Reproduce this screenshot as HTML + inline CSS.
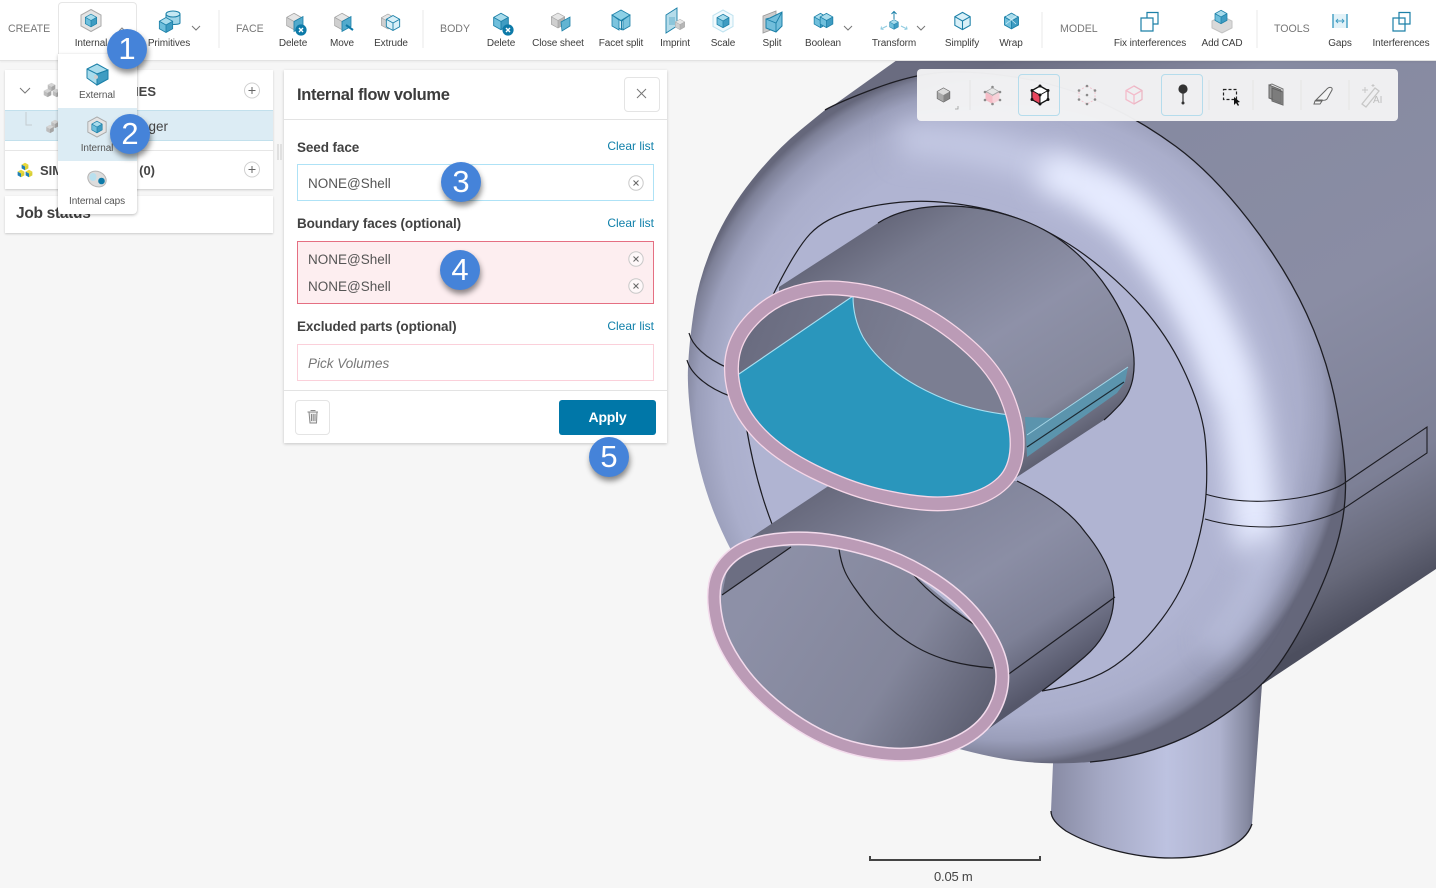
<!DOCTYPE html>
<html lang="en"><head><meta charset="utf-8"><title>Internal flow volume</title>
<style>
html,body{margin:0;padding:0}
body{width:1436px;height:888px;position:relative;overflow:hidden;background:#f6f6f6;font-family:"Liberation Sans",sans-serif;color:#333}
.a{position:absolute;white-space:nowrap}
svg.a{left:0;top:0;overflow:visible}
.l{font-size:10px;line-height:12px;top:38px;color:#3c3c3c;transform:translateX(-50%);letter-spacing:-.1px}
.s{font-size:10.6px;line-height:14px;top:22px;color:#777}
.box{position:absolute;box-sizing:border-box;background:#fff}
.h{font-size:13.5px;font-weight:bold;color:#424242;line-height:16px;letter-spacing:-.1px}
.c{font-size:12px;color:#1080aa;line-height:14px;right:782px}
.v{font-size:13.5px;color:#555;line-height:16px;left:308px}
.b{position:absolute;width:40px;height:40px;border-radius:50%;background:#4583d9;color:#fff;font-size:31px;line-height:40px;text-align:center;box-shadow:1px 4px 6px rgba(0,0,0,.45)}
</style></head><body>

<!-- 3D model -->
<svg class="a" width="1436" height="888" viewBox="0 0 1436 888">
<defs>
<linearGradient id="gBack" gradientUnits="userSpaceOnUse" x1="1000" y1="60" x2="1320" y2="640">
<stop offset="0" stop-color="#6a6c80"/><stop offset=".2" stop-color="#868aa1"/><stop offset=".55" stop-color="#8a8da4"/><stop offset=".82" stop-color="#7d8096"/><stop offset=".93" stop-color="#666879"/><stop offset="1" stop-color="#4c4e5e"/></linearGradient>
<linearGradient id="gStem" gradientUnits="userSpaceOnUse" x1="1050" y1="0" x2="1262" y2="0">
<stop offset="0" stop-color="#878aa3"/><stop offset=".25" stop-color="#a5a9c5"/><stop offset=".55" stop-color="#bdc2e0"/><stop offset=".8" stop-color="#aeb2ce"/><stop offset=".93" stop-color="#868aa1"/><stop offset="1" stop-color="#64667a"/></linearGradient>
<radialGradient id="gHead" gradientUnits="userSpaceOnUse" cx="0" cy="0" r="1" gradientTransform="translate(1010 413) scale(337 352)">
<stop offset="0" stop-color="#b0b4d2"/><stop offset=".74" stop-color="#b0b4d2"/><stop offset=".86" stop-color="#aaaecb"/><stop offset=".93" stop-color="#9a9eba"/><stop offset=".98" stop-color="#7d8097"/><stop offset="1" stop-color="#65677b"/></radialGradient>
<linearGradient id="gPipe" gradientUnits="userSpaceOnUse" x1="779" y1="287" x2="934" y2="529">
<stop offset="0" stop-color="#66687b"/><stop offset=".15" stop-color="#787b8f"/><stop offset=".55" stop-color="#8e91a8"/><stop offset=".85" stop-color="#85889c"/><stop offset="1" stop-color="#5f6173"/></linearGradient>
<linearGradient id="gPipe2" gradientUnits="userSpaceOnUse" x1="747" y1="539" x2="901" y2="779">
<stop offset="0" stop-color="#686a7d"/><stop offset=".3" stop-color="#82859b"/><stop offset=".55" stop-color="#8b8ea5"/><stop offset=".8" stop-color="#7d8096"/><stop offset="1" stop-color="#55576a"/></linearGradient>
<linearGradient id="gIn1" gradientUnits="userSpaceOnUse" x1="750" y1="310" x2="900" y2="370">
<stop offset="0" stop-color="#696b7f"/><stop offset="1" stop-color="#7b7e92"/></linearGradient>
<linearGradient id="gIn2" gradientUnits="userSpaceOnUse" x1="760" y1="590" x2="980" y2="730">
<stop offset="0" stop-color="#8d90a7"/><stop offset=".6" stop-color="#83869b"/><stop offset="1" stop-color="#5c5e70"/></linearGradient>
<filter id="bl" filterUnits="userSpaceOnUse" x="600" y="0" width="836" height="888"><feGaussianBlur stdDeviation="13"/></filter>
<clipPath id="cHead"><path d="M800.5 130Q776 150 752 180Q728 210 713.5 243.5Q699 277 694 310Q689 343 688 368Q687 393 693 433.5Q699 474 713.5 511.5Q728 549 759 599.5Q790 650 835 687.5Q880 725 920 737.5Q960 750 988.5 756Q1017 762 1041.5 763Q1066 764 1090 762Q1114 760 1138 754Q1162 748 1186 737Q1210 726 1236.5 706Q1263 686 1279 664Q1295 642 1311.5 608Q1328 574 1336.5 545.5Q1345 517 1345.5 488.5Q1346 460 1337 410Q1328 360 1306.500 313.5Q1285 267 1248.5 220Q1212 173 1176 146.5Q1140 120 1100 102Q1060 84 1014.5 77Q969 70 940 72.5Q911 75 875 88.5Q839 102 825 110Z"/></clipPath>
</defs>
<path d="M820 115L897 60H1436V569L1263 684L1000 400Z" fill="url(#gBack)"/>
<path d="M1054 740L1263 670L1252 824C1245 845 1215 858 1172 858C1130 858 1090 845 1066 831C1056 824 1051 818 1051 811Z" fill="url(#gStem)"/>
<path d="M1051 811C1051 818 1056 824 1066 831C1090 845 1130 858 1172 858C1215 858 1245 845 1252 824" fill="none" stroke="#1c1c22" stroke-width="1.3"/>
<path d="M800.5 130Q776 150 752 180Q728 210 713.5 243.5Q699 277 694 310Q689 343 688 368Q687 393 693 433.5Q699 474 713.5 511.5Q728 549 759 599.5Q790 650 835 687.5Q880 725 920 737.5Q960 750 988.5 756Q1017 762 1041.5 763Q1066 764 1090 762Q1114 760 1138 754Q1162 748 1186 737Q1210 726 1236.5 706Q1263 686 1279 664Q1295 642 1311.5 608Q1328 574 1336.5 545.5Q1345 517 1345.5 488.5Q1346 460 1337 410Q1328 360 1306.500 313.5Q1285 267 1248.5 220Q1212 173 1176 146.5Q1140 120 1100 102Q1060 84 1014.5 77Q969 70 940 72.5Q911 75 875 88.5Q839 102 825 110Z" fill="url(#gHead)"/>
<g clip-path="url(#cHead)">
<path d="M900 140Q980 140 1050 170" fill="none" stroke="#c4c9e4" stroke-width="34" filter="url(#bl)"/>
<path d="M1060 175Q1100 190 1130 215Q1200 285 1235 390Q1250 450 1255 530" fill="none" stroke="#e6ebff" stroke-width="46" filter="url(#bl)" stroke-linecap="round"/>
<path d="M1100 195Q1115 205 1130 215Q1195 285 1228 385" fill="none" stroke="#e6ebff" stroke-width="22" filter="url(#bl)" stroke-linecap="round"/>
<path d="M1265 540C1258 590 1240 620 1210 650" fill="none" stroke="#bcc1de" stroke-width="30" filter="url(#bl)" opacity=".8"/>
</g>
<!-- outer arc -->
<path d="M1090 762Q1114 760 1138 754Q1162 748 1186 737Q1210 726 1236.5 706Q1263 686 1279 664Q1295 642 1311.5 608Q1328 574 1336.5 545.5Q1345 517 1345.5 488.5Q1346 460 1337 410Q1328 360 1306.500 313.5Q1285 267 1248.5 220Q1212 173 1176 146.5Q1140 120 1100 102Q1060 84 1014.5 77Q969 70 940 72.5Q911 75 875 88.5Q839 102 825 110" fill="none" stroke="#1c1c22" stroke-width="1.3"/>
<!-- band lines -->
<path d="M689 333C692 345 705 358 728 368M687 360C690 372 705 387 730 396" fill="none" stroke="#1c1c22" stroke-width="1.2"/>
<path d="M1205 494C1225 500 1248 502 1268 501C1290 500 1325 495 1343 484L1427 427V453L1340 511C1322 520 1290 527 1268 527C1245 527 1225 525 1205 519" fill="none" stroke="#1c1c22" stroke-width="1.1"/>
<!-- inner flat -->
<path d="M772 297Q795 250 810 234Q825 218 853.5 210.5Q882 203 911 201.5Q940 200 978.5 207.5Q1017 215 1053.5 235Q1090 255 1126 290Q1162 325 1182.5 367.5Q1203 410 1205.5 442Q1208 474 1205.5 500.5Q1203 527 1193 559Q1183 591 1161.5 619.5Q1140 648 1115 665.5Q1090 683 1042 691L772 524Q757 480 746 430Z" fill="#b0b4d2"/>
<path d="M772 297Q795 250 810 234Q825 218 853.5 210.5Q882 203 911 201.5Q940 200 978.5 207.5Q1017 215 1053.5 235Q1090 255 1126 290Q1162 325 1182.5 367.5Q1203 410 1205.5 442Q1208 474 1205.5 500.5Q1203 527 1193 559Q1183 591 1161.5 619.5Q1140 648 1115 665.5Q1090 683 1042 691M746 425Q755 480 772 524" fill="none" stroke="#1c1c22" stroke-width="1.2"/>
<!-- lower pipe -->
<path d="M735 548L830 485L1017 481Q1066 505 1085 532Q1104 555 1110.5 576Q1117 597 1110.5 618.5Q1104 640 1085 656.5Q1066 673 1042 691L980 735L800 700Z" fill="url(#gPipe2)"/>
<path d="M1017 481Q1066 505 1085 532Q1104 555 1110.5 576Q1117 597 1110.5 618.5Q1104 640 1085 656.5Q1066 673 1042 691M1115 597L1006 676" fill="none" stroke="#1c1c22" stroke-width="1.2"/>
<!-- upper pipe -->
<path d="M779 287L878 223Q900 209 934.5 206.5Q969 204 1005.5 214.5Q1042 225 1067 245Q1092 265 1109 291Q1126 317 1131 338.5Q1136 360 1133 377.5Q1130 395 1117 407.5Q1111 414 1104 420L1017 477L780 420Z" fill="url(#gPipe)"/>
<path d="M878 223Q900 209 934.5 206.5Q969 204 1005.5 214.5Q1042 225 1067 245Q1092 265 1109 291Q1126 317 1131 338.5Q1136 360 1133 377.5Q1130 395 1117 407.5Q1111 414 1104 420" fill="none" stroke="#1c1c22" stroke-width="1.2"/>
<!-- small strip -->
<path d="M1025 417L1052 418L1128 367L1125 382L1117 393L1027 457Z" fill="#5b94ad"/>
<path d="M1027 435L1052 418L1128 367" fill="none" stroke="#a5d5e6" stroke-width="1"/>
<path d="M1027 447L1124 382" fill="none" stroke="#1c2a33" stroke-width="1.1"/>
<!-- upper ring interior + blue face -->
<path d="M733 353.5Q737 335 752.5 319Q768 303 786.5 296Q805 289 823.5 288Q842 287 867 292Q892 297 919.5 311.5Q947 326 972 349Q997 372 1007.5 398.5Q1018 425 1017 447.5Q1016 470 1003 482.5Q990 495 970 500Q950 505 927.5 503.5Q905 502 876 495Q847 488 813.5 471.5Q780 455 760.5 435Q741 415 735 393.5Q729 372 733 353.5Z" fill="url(#gIn1)"/>
<path d="M853 296L736 376L735 393.5Q741 415 760.5 435Q780 455 813.5 471.5Q847 488 876 495Q905 502 927.5 503.5Q950 505 970 500Q990 495 1003 482.5Q1016 470 1017 447.5Q1018 425 1010 415Q975 411 947 400Q917 388 897 373Q875 357 863 337Q853 318 853 296Z" fill="#2a96bc"/>
<path d="M736 376L853 296Q853 318 863 337Q875 357 897 373Q917 388 947 400Q975 411 1010 415" fill="none" stroke="#a8e0f2" stroke-width="1.1"/>
<path d="M733 353.5Q737 335 752.5 319Q768 303 786.5 296Q805 289 823.5 288Q842 287 867 292Q892 297 919.5 311.5Q947 326 972 349Q997 372 1007.5 398.5Q1018 425 1017 447.5Q1016 470 1003 482.5Q990 495 970 500Q950 505 927.5 503.5Q905 502 876 495Q847 488 813.5 471.5Q780 455 760.5 435Q741 415 735 393.5Q729 372 733 353.5Z" fill="none" stroke="#f6d7e8" stroke-width="15"/>
<path d="M733 353.5Q737 335 752.5 319Q768 303 786.5 296Q805 289 823.5 288Q842 287 867 292Q892 297 919.5 311.5Q947 326 972 349Q997 372 1007.5 398.5Q1018 425 1017 447.5Q1016 470 1003 482.5Q990 495 970 500Q950 505 927.5 503.5Q905 502 876 495Q847 488 813.5 471.5Q780 455 760.5 435Q741 415 735 393.5Q729 372 733 353.5Z" fill="none" stroke="#bb9bb6" stroke-width="12.4"/>
<!-- lower ring -->
<path d="M715 584Q718 568 731.5 556.5Q745 545 767.5 541Q790 537 815 539Q840 541 872 550.5Q904 560 934.5 580Q965 600 982.5 625Q1000 650 1002 670Q1004 690 994.5 708.5Q985 727 965 738.5Q945 750 918.5 753.5Q892 757 858.5 749.5Q825 742 792.5 719.5Q760 697 741 671Q722 645 717 622.5Q712 600 715 584Z" fill="url(#gIn2)"/>
<path d="M722 595L791 547L760 545L728 565Z" fill="#6c6e82"/>
<path d="M905 560L985 625L984 632L911 572Z" fill="#b4b8d4"/>
<path d="M791 547L722 595M839 549C842 570 848 578 854 587C870 610 880 620 897 634C915 648 930 655 950 661C965 665 980 667 993 668M911 572C930 595 955 612 984 631" fill="none" stroke="#1c1c22" stroke-width="1.2"/>
<path d="M715 584Q718 568 731.5 556.5Q745 545 767.5 541Q790 537 815 539Q840 541 872 550.5Q904 560 934.5 580Q965 600 982.5 625Q1000 650 1002 670Q1004 690 994.5 708.5Q985 727 965 738.5Q945 750 918.5 753.5Q892 757 858.5 749.5Q825 742 792.5 719.5Q760 697 741 671Q722 645 717 622.5Q712 600 715 584Z" fill="none" stroke="#f3dbec" stroke-width="14"/>
<path d="M715 584Q718 568 731.5 556.5Q745 545 767.5 541Q790 537 815 539Q840 541 872 550.5Q904 560 934.5 580Q965 600 982.5 625Q1000 650 1002 670Q1004 690 994.5 708.5Q985 727 965 738.5Q945 750 918.5 753.5Q892 757 858.5 749.5Q825 742 792.5 719.5Q760 697 741 671Q722 645 717 622.5Q712 600 715 584Z" fill="none" stroke="#bb9bb6" stroke-width="11"/>
<path d="M870 856V860H1040V856" fill="none" stroke="#444" stroke-width="2"/>
</svg>
<div class="a" style="left:934px;top:869px;font-size:13px;line-height:16px;color:#444;letter-spacing:-.2px">0.05 m</div>

<!-- top bar -->
<div class="box" style="left:0;top:0;width:1436px;height:61px;border-bottom:1px solid #e2e2e2;box-shadow:0 1px 2px rgba(0,0,0,.05)"></div>

<!-- view toolbar -->
<div class="box" style="left:917px;top:69px;width:481px;height:52px;background:rgba(243,243,244,.97);border-radius:4px"></div>
<div class="box" style="left:1018px;top:74px;width:42px;height:42px;background:transparent;border:1px solid #b5dcec;border-radius:4px"></div>
<div class="box" style="left:1161px;top:74px;width:42px;height:42px;background:transparent;border:1px solid #b5dcec;border-radius:4px"></div>

<!-- left panels -->
<div class="box" style="left:5px;top:70px;width:268px;height:119px;box-shadow:0 1px 2px rgba(0,0,0,.18)"></div>
<div class="box" style="left:5px;top:110px;width:268px;height:31px;background:#dcecf4;border-top:1px solid #c2e0ec;border-bottom:1px solid #c2e0ec"></div>
<div class="box" style="left:5px;top:150px;width:268px;height:1px;background:#e6e6e6"></div>
<div class="box" style="left:5px;top:196px;width:268px;height:37px;box-shadow:0 1px 2px rgba(0,0,0,.18)"></div>
<div class="a" style="right:1280px;top:84px;font-size:13px;font-weight:bold;line-height:16px;color:#444">GEOMETRIES</div>
<div class="a" style="right:1268px;top:119px;font-size:13.5px;line-height:16px;color:#444">Heat exchanger</div>
<div class="a" style="left:40px;top:163px;font-size:13px;font-weight:bold;line-height:16px;color:#444">SIM</div>
<div class="a" style="right:1281px;top:163px;font-size:13px;font-weight:bold;line-height:16px;color:#444">(0)</div>
<div class="a" style="left:16px;top:204px;font-size:15.5px;font-weight:bold;line-height:20px;color:#3f3f3f;letter-spacing:-.3px">Job status</div>

<!-- flow panel -->
<div class="box" style="left:284px;top:70px;width:383px;height:373px;box-shadow:0 1px 3px rgba(0,0,0,.2)"></div>
<div class="box" style="left:284px;top:119px;width:383px;height:1px;background:#e3e3e3"></div>
<div class="box" style="left:284px;top:390px;width:383px;height:1px;background:#e3e3e3"></div>
<div class="a" style="left:297px;top:85px;font-size:16.5px;font-weight:bold;line-height:20px;color:#3c3c3c;letter-spacing:-.35px">Internal flow volume</div>
<div class="box" style="left:624px;top:77px;width:36px;height:35px;border:1px solid #e4e4e4;border-radius:4px"></div>
<div class="a h" style="left:297px;top:140px">Seed face</div>
<div class="a c" style="top:139px">Clear list</div>
<div class="box" style="left:297px;top:164px;width:357px;height:37px;border:1px solid #aee2f6"></div>
<div class="a v" style="top:176px">NONE@Shell</div>
<div class="a h" style="left:297px;top:216px">Boundary faces (optional)</div>
<div class="a c" style="top:216px">Clear list</div>
<div class="box" style="left:297px;top:241px;width:357px;height:63px;background:#fdeef0;border:1px solid #e56f82"></div>
<div class="a v" style="top:252px">NONE@Shell</div>
<div class="a v" style="top:279px">NONE@Shell</div>
<div class="a h" style="left:297px;top:319px">Excluded parts (optional)</div>
<div class="a c" style="top:319px">Clear list</div>
<div class="box" style="left:297px;top:344px;width:357px;height:37px;border:1px solid #fbd0da"></div>
<div class="a v" style="top:356px;font-style:italic;color:#777">Pick Volumes</div>
<div class="box" style="left:295px;top:400px;width:35px;height:35px;border:1px solid #e4e4e4;border-radius:4px"></div>
<div class="box" style="left:559px;top:400px;width:97px;height:35px;background:#0077a8;border-radius:3px;color:#fff;font-size:14px;font-weight:bold;line-height:35px;text-align:center;letter-spacing:-.2px">Apply</div>

<!-- top-bar labels -->
<div class="a s" style="left:8px">CREATE</div>
<div class="a s" style="left:236px">FACE</div>
<div class="a s" style="left:440px">BODY</div>
<div class="a s" style="left:1060px">MODEL</div>
<div class="a s" style="left:1274px">TOOLS</div>
<div class="a l" style="left:91px">Internal</div>
<div class="a l" style="left:169px">Primitives</div>
<div class="a l" style="left:293px">Delete</div>
<div class="a l" style="left:342px">Move</div>
<div class="a l" style="left:391px">Extrude</div>
<div class="a l" style="left:501px">Delete</div>
<div class="a l" style="left:558px">Close sheet</div>
<div class="a l" style="left:621px">Facet split</div>
<div class="a l" style="left:675px">Imprint</div>
<div class="a l" style="left:723px">Scale</div>
<div class="a l" style="left:772px">Split</div>
<div class="a l" style="left:823px">Boolean</div>
<div class="a l" style="left:894px">Transform</div>
<div class="a l" style="left:962px">Simplify</div>
<div class="a l" style="left:1011px">Wrap</div>
<div class="a l" style="left:1150px">Fix interferences</div>
<div class="a l" style="left:1222px">Add CAD</div>
<div class="a l" style="left:1340px">Gaps</div>
<div class="a l" style="left:1401px">Interferences</div>

<!-- UI icons -->
<svg class="a" width="1436" height="888" viewBox="0 0 1436 888">
<defs>
<symbol id="cb" viewBox="0 0 24 24"><path d="M12 3L20 7.5L12 12L4 7.5Z" fill="#a9dcec"/><path d="M4 7.5L12 12V21L4 16.5Z" fill="#6fbfdc"/><path d="M20 7.5L12 12V21L20 16.5Z" fill="#3f9cc2"/><path d="M12 3L20 7.5V16.5L12 21L4 16.5V7.5ZM4 7.5L12 12L20 7.5M12 12V21" fill="none" stroke="#1c80a8" stroke-width="1"/></symbol>
<symbol id="cl" viewBox="0 0 24 24"><path d="M12 3L20 7.5V16.5L12 21L4 16.5V7.5Z" fill="#d9f0f8"/><path d="M12 3L20 7.5V16.5L12 21L4 16.5V7.5ZM4 7.5L12 12L20 7.5M12 12V21" fill="none" stroke="#1c80a8" stroke-width="1.1"/></symbol>
<symbol id="cg" viewBox="0 0 24 24"><path d="M12 3L20 7.5L12 12L4 7.5Z" fill="#e6e6e6"/><path d="M4 7.5L12 12V21L4 16.5Z" fill="#cfcfcf"/><path d="M20 7.5L12 12V21L20 16.5Z" fill="#b5b5b5"/><path d="M12 3L20 7.5V16.5L12 21L4 16.5V7.5ZM4 7.5L12 12L20 7.5M12 12V21" fill="none" stroke="#a3a3a3" stroke-width=".8"/></symbol>
<symbol id="cd" viewBox="0 0 24 24"><path d="M12 3L20 7.5L12 12L4 7.5Z" fill="#dcdcdc"/><path d="M4 7.5L12 12V21L4 16.5Z" fill="#a9a9a9"/><path d="M20 7.5L12 12V21L20 16.5Z" fill="#858585"/><path d="M12 3L20 7.5V16.5L12 21L4 16.5V7.5Z" fill="none" stroke="#6b6b6b" stroke-width=".9"/></symbol>
<symbol id="ct" viewBox="0 0 24 24"><path d="M12 2L21 7V17L12 22L3 17V7Z" fill="#bdbdbd"/><path d="M12 2L21 7L12 12L3 7Z" fill="#d4d4d4"/><path d="M21 7L12 12V22L21 17Z" fill="#a5a5a5"/></symbol>
<symbol id="cy" viewBox="0 0 24 24"><path d="M12 2L21 7L12 12L3 7Z" fill="#e8d83a"/><path d="M3 7L12 12V22L3 17Z" fill="#1f7fb5"/><path d="M21 7L12 12V22L21 17Z" fill="#d8cf35"/></symbol>
<symbol id="int" viewBox="0 0 24 24"><path d="M12 1L22 6.5V17.5L12 23L2 17.5V6.5Z" fill="#e4e4e4" stroke="#aaa" stroke-width="1"/><use href="#cb" x="3.5" y="3.5" width="17" height="17"/></symbol>
<symbol id="x" viewBox="0 0 12 12"><circle cx="6" cy="6" r="5.6" fill="#0d7aa8"/><path d="M4 4L8 8M8 4L4 8" stroke="#fff" stroke-width="1.4"/></symbol>
<symbol id="cc" viewBox="0 0 16 16"><circle cx="8" cy="8" r="7.2" fill="#fff" fill-opacity=".6" stroke="#c9c9c9"/><path d="M5.5 5.5L10.5 10.5M10.5 5.5L5.5 10.5" stroke="#666" stroke-width="1"/></symbol>
</defs>
<g stroke="#ececec" stroke-width="1.2"><path d="M219 10V48M423 10V48M1042 12V48M1257 10V48"/></g>
<g stroke="#e4e4e4" stroke-width="1"><path d="M970 80V110M1209 80V110M1253 80V110M1301 80V110M1349 80V110"/></g>
<!-- chevrons -->
<path d="M192 26L196 30L200 26M844 26L848 30L852 26M917 26L921 30L925 26" fill="none" stroke="#777" stroke-width="1"/>
<use href="#int" x="79" y="8" width="24" height="25"/>
<path d="M119 31L122 28L125 31" fill="none" stroke="#888"/>
<!-- primitives -->
<path d="M166 14V23C166 25 180 25 180 23V14Z" fill="#9fd5e8" stroke="#1c80a8"/><ellipse cx="173" cy="14" rx="7" ry="3" fill="#c6e8f3" stroke="#1c80a8"/>
<use href="#cb" x="156" y="15" width="20" height="20"/>
<!-- face -->
<use href="#cg" x="283" y="10" width="22" height="23"/><path d="M294 21.5L303 16.5V26.5L294 31.5Z" fill="#52aacc" stroke="#1c80a8" stroke-width=".8"/><use href="#x" x="295" y="24" width="12" height="12"/>
<use href="#cg" x="331" y="10" width="22" height="23"/><path d="M342 21.5L351 16.5V26.5L342 31.5Z" fill="#52aacc" stroke="#1c80a8" stroke-width=".8"/><path d="M346 25L353 30" stroke="#0d7aa8" stroke-width="2"/>
<use href="#cg" x="378" y="11" width="20" height="21"/><use href="#cl" x="383" y="13" width="20" height="20"/>
<!-- body -->
<use href="#cb" x="490" y="10" width="22" height="23"/><use href="#x" x="502" y="24" width="12" height="12"/>
<use href="#cg" x="548" y="10" width="20" height="21"/><path d="M561 22L570 17V26L562 31Z" fill="#62b4d2" stroke="#1c80a8" stroke-width=".8"/>
<use href="#cl" x="610" y="9" width="23" height="24"/><path d="M612 15L621 20.5L630 15L621 10Z" fill="#8cd0e6" stroke="#1c80a8" stroke-width=".8"/><path d="M612 15V26L619 30V20ZM630 15V26L623 30V20Z" fill="#7cc4de" stroke="#1c80a8" stroke-width=".8"/>
<path d="M666 18L677 11V29L666 36Z" transform="translate(0 -3)" fill="#b5dcea" stroke="#1c80a8" stroke-width=".9"/><rect x="669" y="17" width="6" height="8" fill="#8cc5da"/><use href="#cg" x="673" y="17" width="14" height="15"/>
<path d="M723 10L733 15.5V26.5L723 32L713 26.5V15.5Z" fill="#f2fafd" stroke="#bfe3f0"/><use href="#cb" x="714" y="12" width="18" height="18"/>
<path d="M763 16L776 11V28L763 33Z" fill="#ccc" stroke="#999" stroke-width=".8"/><path d="M770 18L782 12V26L776 32L766 28V19Z" fill="#72bedb" stroke="#1c80a8"/><path d="M766 19L776 23L782 12M776 23V32" fill="none" stroke="#1c80a8" stroke-width=".9"/>
<use href="#cb" x="811" y="10" width="19" height="21"/><use href="#cb" x="817" y="10" width="19" height="21"/>
<use href="#cb" x="887" y="18" width="14" height="13"/><path d="M894 19V12M891.5 14L894 11.5L896.500 14" fill="none" stroke="#1c80a8" stroke-width="1"/><path d="M887 26L881 29M901 26L907 29M881.500 26.500L881 29L883.500 29.500M906.500 26.500L907 29L904.500 29.500" fill="none" stroke="#8ecbe0" stroke-width="1"/>
<use href="#cl" x="951" y="9" width="23" height="24"/>
<use href="#cb" x="1001" y="10" width="21" height="22"/><path d="M1006 15L1016 24M1017 15L1006 24" stroke="#d5f0f8" stroke-width=".7"/>
<path d="M1141 18H1153V31H1141ZM1147 12.500H1158V24H1153V18H1147Z" fill="#fff" stroke="#1c80a8" stroke-width="1.2"/>
<path d="M1212 21L1222 16L1232 21V28L1222 33L1212 28Z" fill="#d9d9d9" stroke="#c2c2c2"/><use href="#cb" x="1212" y="8" width="18" height="18"/>
<rect x="1333" y="14" width="14" height="14" fill="#e2f2f8"/><path d="M1333 14V28M1347 14V28" stroke="#3f9cc2" stroke-width="1.4"/><path d="M1336 21H1344M1338 19L1336 21L1338 23M1342 19L1344 21L1342 23" fill="none" stroke="#3f9cc2" stroke-width=".9"/>
<path d="M1393 18H1405V31H1393ZM1399 12.500H1410V24H1399Z" fill="none" stroke="#1c80a8" stroke-width="1.2"/>
<!-- view toolbar icons -->
<use href="#cd" x="934" y="85" width="19" height="20"/><path d="M955 109H958V106" fill="none" stroke="#999" stroke-width=".8"/>
<use href="#cg" x="983" y="85" width="19" height="20"/><path d="M985.500 92L992.500 96V104L985.500 100Z" fill="#f5bcc6"/><path d="M999.500 92L992.500 96V104L999.500 100Z" fill="#f7d2d9"/><g fill="#8b8b8b"><circle cx="992.500" cy="87" r="1.300"/><circle cx="992.500" cy="104" r="1.300"/><circle cx="985" cy="92" r="1.300"/><circle cx="1000" cy="92" r="1.300"/><circle cx="985" cy="100" r="1.300"/><circle cx="1000" cy="100" r="1.300"/></g>
<path d="M1040 86L1048 90.500V99.500L1040 104L1032 99.500V90.500Z" fill="#fff" stroke="#111" stroke-width="1.400"/><path d="M1032 90.500L1040 95V104L1032 99.500Z" fill="#e8475f" stroke="#111"/><path d="M1040 95L1048 90.500" stroke="#111"/><g fill="#111"><circle cx="1040" cy="86" r="1.500"/><circle cx="1032" cy="90.500" r="1.500"/><circle cx="1048" cy="90.500" r="1.500"/><circle cx="1032" cy="99.500" r="1.500"/><circle cx="1048" cy="99.500" r="1.500"/><circle cx="1040" cy="104" r="1.500"/><circle cx="1040" cy="95" r="1.500"/></g>
<path d="M1087 86L1095 90.500V99.500L1087 104L1079 99.500V90.500Z" fill="none" stroke="#f2c6d0" stroke-dasharray="2 1.500"/><g fill="#8b8b8b"><circle cx="1087" cy="86" r="1.300"/><circle cx="1079" cy="90.500" r="1.300"/><circle cx="1095" cy="90.500" r="1.300"/><circle cx="1079" cy="99.500" r="1.300"/><circle cx="1095" cy="99.500" r="1.300"/><circle cx="1087" cy="104" r="1.300"/><circle cx="1087" cy="95" r="1.300"/></g>
<path d="M1134 86L1142 90.500V99.500L1134 104L1126 99.500V90.500ZM1126 90.500L1134 95L1142 90.500M1134 95V104" fill="none" stroke="#f3bccb" stroke-width="1.300"/><path d="M1134 86L1142 90.500V99.500L1134 104" fill="none" stroke="#e9b6c3" stroke-width="1"/>
<circle cx="1183" cy="89" r="4.600" fill="#333"/><path d="M1183 93V103" stroke="#333" stroke-width="1.200"/><circle cx="1183" cy="103" r="1.500" fill="#333"/>
<rect x="1223.500" y="89.500" width="13" height="10" fill="none" stroke="#222" stroke-width="1.200" stroke-dasharray="3 2"/><path d="M1234 97L1234 105L1236 103L1238 106L1239 105L1237.500 102.500L1240 102Z" fill="#111"/>
<path d="M1269 85L1281 90V103L1269 98Z" fill="#999" stroke="#666"/><path d="M1272 88L1283 92V105L1272 101Z" fill="#777" stroke="#555" opacity=".85"/><path d="M1269 85L1272 84L1283 89V92" fill="none" stroke="#777"/>
<path d="M1316 100L1326 90C1329 86 1333 87 1332 90L1327 99C1325 101 1322 100 1322 100ZM1315 101H1322L1320 104H1314Z" fill="#f4f4f4" stroke="#666" stroke-width="1"/>
<path d="M1362 104L1375 88L1379 91L1366 107Z" fill="none" stroke="#c7c7c7" stroke-width="1.300"/><path d="M1365 87V93M1362 90H1368M1373 84V87M1371.500 85.500H1374.500" stroke="#c7c7c7"/>
<text x="1373" y="103" font-family="Liberation Sans, sans-serif" font-size="10" fill="#bdbdbd">AI</text>
<!-- tree -->
<path d="M20 88L25 93L30 88" fill="none" stroke="#777" stroke-width="1"/>
<use href="#ct" x="46" y="82" width="11" height="10"/><use href="#ct" x="42" y="88" width="11" height="10"/><use href="#ct" x="51" y="88" width="11" height="10"/>
<path d="M26 112V125H32" fill="none" stroke="#c4ccd1"/>
<use href="#ct" x="50" y="119" width="10" height="10"/><use href="#ct" x="45" y="124" width="10" height="10"/>
<use href="#cy" x="20" y="162" width="10" height="9"/><use href="#cy" x="16" y="169" width="10" height="9"/><use href="#cy" x="24" y="169" width="10" height="9"/>
<circle cx="252" cy="90.500" r="7.500" fill="#fff" stroke="#d0d0d0"/><path d="M248.500 90.500H255.500M252 87V94" stroke="#666"/>
<circle cx="252" cy="169.500" r="7.500" fill="#fff" stroke="#d0d0d0"/><path d="M248.500 169.500H255.500M252 166V173" stroke="#666"/>
<path d="M278 144V160M281 144V160" stroke="#d5d5d5" stroke-width="1.300"/>
<!-- panel icons -->
<path d="M637 89L646 98M646 89L637 98" stroke="#777" stroke-width="1"/>
<use href="#cc" x="628" y="175" width="16" height="16"/>
<use href="#cc" x="628" y="251" width="16" height="16"/>
<use href="#cc" x="628" y="278" width="16" height="16"/>
<path d="M307.500 412H318M309 412L310 423H316.500L317 412M310.500 410.500H315.500M311.500 414V421M313.200 414V421M315 414V421" fill="#eee" stroke="#888" stroke-width="1"/>
</svg>

<!-- dropdown -->
<div class="box" style="left:58px;top:2px;width:79px;height:52px;background:transparent;border:1px solid #e6e6e6;border-bottom:0;border-radius:4px 4px 0 0"></div>
<div class="box" style="left:58px;top:54px;width:79px;height:160px;border-radius:0 0 4px 4px;box-shadow:0 1px 3px rgba(0,0,0,.28)"></div>
<div class="box" style="left:58px;top:108px;width:79px;height:53px;background:#dcecf4"></div>
<div class="a l" style="left:97px;top:90px;color:#555">External</div>
<div class="a l" style="left:97px;top:143px;color:#555">Internal</div>
<div class="a l" style="left:97px;top:196px;color:#555">Internal caps</div>
<svg class="a" width="1436" height="888" viewBox="0 0 1436 888">
<path d="M87 69L97 64L108 70V79L97 85L87 78Z" fill="#a9dcec" stroke="#1c80a8"/><path d="M87 69L97 74L108 70M97 74V85" fill="none" stroke="#1c80a8"/><path d="M97 74L108 70V79L97 85Z" fill="#3f9cc2" stroke="#1c80a8"/><circle cx="96" cy="77" r="2" fill="#ccc"/>
<use href="#int" x="86" y="115" width="22" height="24"/>
<ellipse cx="97" cy="179" rx="9.500" ry="7.500" transform="rotate(25 97 179)" fill="#dcdcdc" stroke="#b5b5b5"/><ellipse cx="93" cy="177" rx="3.500" ry="4" fill="#b9e0ee"/><circle cx="101.500" cy="181" r="3.300" fill="#0d7aa8"/>
</svg>

<!-- badges -->
<div class="b" style="left:107px;top:29px">1</div>
<div class="b" style="left:110px;top:114px">2</div>
<div class="b" style="left:441px;top:162px">3</div>
<div class="b" style="left:440px;top:250px">4</div>
<div class="b" style="left:589px;top:437px">5</div>
</body></html>
